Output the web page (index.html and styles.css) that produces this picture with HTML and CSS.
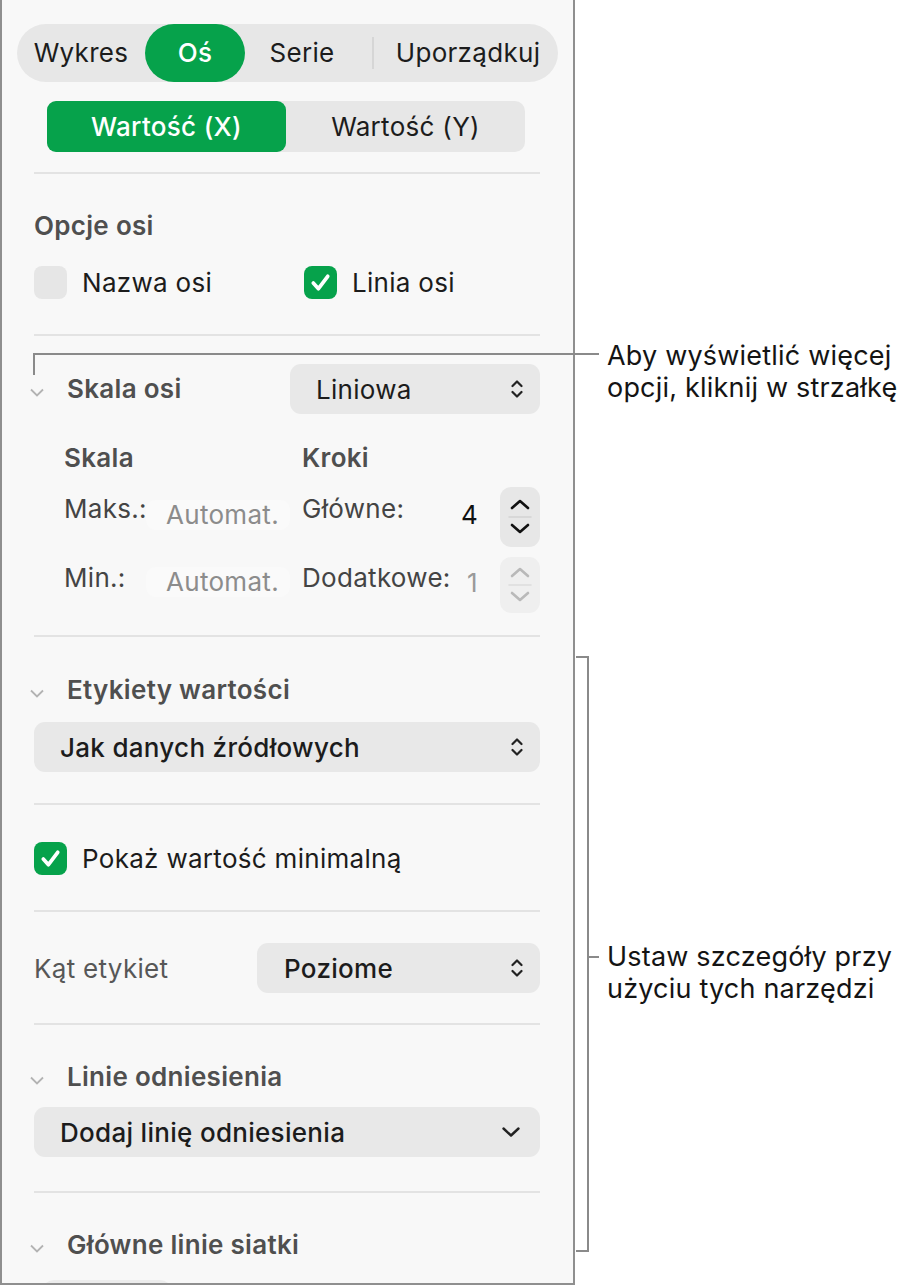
FILE: index.html
```html
<!DOCTYPE html>
<html lang="pl">
<head>
    <meta charset="UTF-8">
    <meta name="viewport" content="width=device-width, initial-scale=1.0">
    <title>Oś – inspektor wykresu</title>
    <link rel="stylesheet" href="styles.css">
</head>
<body>
    <div class="page">
        <aside class="inspector">
            <nav class="tabs">
                <span class="tab tab-chart">Wykres</span>
                <span class="tab tab-axis active">Oś</span>
                <span class="tab tab-series">Serie</span>
                <span class="tab-sep"></span>
                <span class="tab tab-arrange">Uporządkuj</span>
            </nav>

            <div class="segmented">
                <span class="seg active">Wartość (X)</span>
                <span class="seg">Wartość (Y)</span>
            </div>

            <section class="group group-options">
                <h3 class="group-title">Opcje osi</h3>
                <div class="check-row">
                    <label class="check check-wide"><span class="box"></span>Nazwa osi</label>
                    <label class="check"><span class="box on"><svg viewBox="0 0 32 32"><path d="M9 16.5l5 5.5 9-12"/></svg></span>Linia osi</label>
                </div>
            </section>

            <section class="group group-scale">
                <div class="disclosure-row">
                    <span class="disclosure"><svg viewBox="0 0 14 9"><path d="M1 1.5l6 6 6-6"/></svg></span>
                    <h3 class="group-title">Skala osi</h3>
                    <div class="popup popup-scale">
                        <span>Liniowa</span>
                        <svg class="updown" viewBox="0 0 12 22"><path d="M1.5 8L6 3.5 10.5 8M1.5 14L6 18.5 10.5 14"/></svg>
                    </div>
                </div>

                <div class="scale-grid">
                    <span class="sub-title col-a">Skala</span>
                    <span class="sub-title col-b">Kroki</span>
                </div>
                <div class="scale-grid scale-row row-max">
                    <span class="field-label">Maks.:</span>
                    <span class="field">Automat.</span>
                    <span class="field-label col-b">Główne:</span>
                    <span class="value">4</span>
                    <div class="stepper">
                        <svg viewBox="0 0 40 60"><path d="M12 21l8-7 8 7M12 38l8 7 8-7"/><line x1="9" y1="30" x2="31" y2="30"/></svg>
                    </div>
                </div>
                <div class="scale-grid scale-row row-min">
                    <span class="field-label">Min.:</span>
                    <span class="field">Automat.</span>
                    <span class="field-label col-b">Dodatkowe:</span>
                    <span class="value muted">1</span>
                    <div class="stepper disabled">
                        <svg viewBox="0 0 40 56"><path d="M12 19l8-7 8 7M12 36l8 7 8-7"/><line x1="9" y1="28" x2="31" y2="28"/></svg>
                    </div>
                </div>
            </section>

            <section class="group group-labels">
                <div class="disclosure-row">
                    <span class="disclosure"><svg viewBox="0 0 14 9"><path d="M1 1.5l6 6 6-6"/></svg></span>
                    <h3 class="group-title">Etykiety wartości</h3>
                </div>
                <div class="popup popup-full strong">
                    <span>Jak danych źródłowych</span>
                    <svg class="updown" viewBox="0 0 12 22"><path d="M1.5 8L6 3.5 10.5 8M1.5 14L6 18.5 10.5 14"/></svg>
                </div>
            </section>

            <section class="group group-min">
                <label class="check"><span class="box on"><svg viewBox="0 0 32 32"><path d="M9 16.5l5 5.5 9-12"/></svg></span>Pokaż wartość minimalną</label>
            </section>

            <section class="group group-angle">
                <span class="plain-label">Kąt etykiet</span>
                <div class="popup popup-angle strong">
                    <span>Poziome</span>
                    <svg class="updown" viewBox="0 0 12 22"><path d="M1.5 8L6 3.5 10.5 8M1.5 14L6 18.5 10.5 14"/></svg>
                </div>
            </section>

            <section class="group group-ref">
                <div class="disclosure-row">
                    <span class="disclosure"><svg viewBox="0 0 14 9"><path d="M1 1.5l6 6 6-6"/></svg></span>
                    <h3 class="group-title">Linie odniesienia</h3>
                </div>
                <div class="popup popup-full strong">
                    <span>Dodaj linię odniesienia</span>
                    <svg class="chev-down" viewBox="0 0 18 10"><path d="M1.5 1.5L9 8.5l7.5-7"/></svg>
                </div>
            </section>

            <section class="group group-grid">
                <div class="disclosure-row">
                    <span class="disclosure"><svg viewBox="0 0 14 9"><path d="M1 1.5l6 6 6-6"/></svg></span>
                    <h3 class="group-title">Główne linie siatki</h3>
                </div>
                <div class="peek"></div>
            </section>
        </aside>

        <!-- callouts -->
        <div class="callout-line line-top-h"></div>
        <div class="callout-line line-top-v"></div>
        <p class="callout callout-top">Aby wyświetlić więcej<br>opcji, kliknij w strzałkę</p>

        <div class="bracket"></div>
        <div class="callout-line line-mid"></div>
        <p class="callout callout-mid">Ustaw szczegóły przy<br>użyciu tych narzędzi</p>
    </div>
</body>
</html>
```

FILE: styles.css
```css
body {
    margin: 0;
    background-color: #fff;
    font-family: Inter, "Noto Sans", sans-serif;
    color: #1c1c1c;
}

.page {
    position: relative;
    width: 904px;
    height: 1287px;
    overflow: hidden;
}

.inspector {
    box-sizing: border-box;
    width: 575px;
    height: 1285px;
    padding: 0 33px 0 32px;
    background-color: #f8f8f8;
    border: 2px solid #8f8f8f;
    border-top: none;
    overflow: hidden;
    font-size: 26px;
    letter-spacing: 0.3px;
}

/* top tabs */
.tabs {
    display: flex;
    align-items: center;
    margin: 24px -18px 0 -17px;
    height: 58px;
    background-color: #e7e7e7;
    border-radius: 29px;
}

.tab {
    flex: none;
    height: 58px;
    line-height: 58px;
    text-align: center;
}

.tab-chart { width: 128px; }
.tab-axis { width: 100px; }
.tab-series { width: 114px; }
.tab-arrange { width: 180px; margin-left: 4px; }

.tab.active {
    background-color: #06a24b;
    color: #fff;
    font-weight: 500;
    border-radius: 29px;
}

.tab-sep {
    width: 2px;
    height: 32px;
    margin-left: 13px;
    background-color: #d6d6d6;
}

/* X / Y switch */
.segmented {
    display: flex;
    width: 478px;
    height: 51px;
    margin: 19px 0 20px 13px;
    background-color: #e7e7e7;
    border-radius: 10px;
}

.seg {
    flex: 1;
    line-height: 51px;
    text-align: center;
}

.seg.active {
    background-color: #06a24b;
    color: #fff;
    font-weight: 500;
    border-radius: 9px;
}

/* groups */
.group {
    border-top: 2px solid #e3e3e3;
}

.group-title {
    margin: 0;
    font-size: 26px;
    line-height: 30px;
    font-weight: 600;
    color: #4f4f4f;
}

.disclosure-row {
    display: flex;
    align-items: center;
}

.disclosure {
    display: flex;
    width: 14px;
    margin: 6px 23px 0 -4px;
}

.disclosure svg {
    width: 14px;
    height: 9px;
    fill: none;
    stroke: #b3b3b3;
    stroke-width: 1.8;
}

.check-row {
    display: flex;
    margin-top: 25px;
}

.check {
    display: flex;
    align-items: center;
    gap: 15px;
    height: 32px;
}

.check-wide {
    width: 270px;
}

.box {
    width: 33px;
    height: 33px;
    border-radius: 8px;
    background-color: #e6e6e6;
}

.box.on {
    background-color: #06a24b;
}

.box svg {
    width: 33px;
    height: 33px;
    fill: none;
    stroke: #fff;
    stroke-width: 3.6;
    stroke-linecap: round;
    stroke-linejoin: round;
}

.group-options { padding: 37px 0 36px; }
.group-scale { padding: 28px 0 22px; }
.group-labels { padding: 38px 0 31px; }
.group-min { padding: 37px 0 36px; }
.group-angle { padding: 31px 0 30px; display: flex; align-items: center; justify-content: space-between; }
.group-ref { padding: 37px 0 34px; }
.group-grid { padding: 37px 0 0; }

/* popups */
.popup {
    box-sizing: border-box;
    display: flex;
    align-items: center;
    justify-content: space-between;
    height: 50px;
    padding: 0 17px 0 26px;
    background-color: #e8e8e8;
    border-radius: 11px;
    color: #1c1c1c;
}

.popup.strong span {
    font-weight: 500;
}

.popup-scale {
    width: 250px;
    margin-left: auto;
}

.popup-full {
    margin-top: 17px;
}

.group-ref .popup-full {
    margin-top: 15px;
}

.popup-angle {
    width: 283px;
    padding-left: 27px;
}

.updown {
    width: 12px;
    height: 22px;
    fill: none;
    stroke: #222;
    stroke-width: 2.2;
    stroke-linecap: round;
    stroke-linejoin: round;
}

.chev-down {
    width: 18px;
    height: 10px;
    margin-right: 3px;
    fill: none;
    stroke: #222;
    stroke-width: 2.4;
    stroke-linecap: round;
    stroke-linejoin: round;
}

.plain-label {
    color: #575757;
}

/* scale / steps grid */
.scale-grid {
    display: grid;
    grid-template-columns: 86px 140px 12px 150px 48px 40px;
    padding-left: 30px;
}

.sub-title {
    margin-top: 29px;
    line-height: 30px;
    font-weight: 600;
    color: #4f4f4f;
}

.col-a { grid-column: 1; }
.col-b { grid-column: 4; }

.scale-row {
    align-items: start;
}

.row-max {
    height: 60px;
    margin-top: 14px;
}

.row-min {
    height: 56px;
    margin-top: 10px;
}

.field-label {
    line-height: 30px;
    color: #444;
    white-space: nowrap;
}

.row-max .field-label { margin-top: 7px; }
.row-min .field-label { margin-top: 6px; }

.field {
    grid-column: 2;
    margin-left: -4px;
    padding-left: 20px;
    line-height: 30px;
    color: #8c8c8c;
    background-color: #fafafa;
    border-radius: 10px;
    white-space: nowrap;
}

.row-max .field { margin-top: 13px; }
.row-min .field { margin-top: 10px; }

.value {
    grid-column: 5;
    padding-right: 22px;
    line-height: 30px;
    text-align: right;
    color: #111;
}

.row-max .value { margin-top: 13px; }
.row-min .value { margin-top: 11px; }

.value.muted {
    color: #9a9a9a;
}

.stepper {
    grid-column: 6;
    height: 100%;
    background-color: #e7e7e7;
    border-radius: 11px;
}

.stepper svg {
    display: block;
    width: 40px;
    height: 100%;
    fill: none;
    stroke: #111;
    stroke-width: 2.6;
    stroke-linecap: round;
    stroke-linejoin: round;
}

.stepper svg line {
    stroke: #d4d4d4;
    stroke-width: 1.5;
}

.stepper.disabled {
    background-color: #efefef;
}

.stepper.disabled svg {
    stroke: #b9b9b9;
}

.stepper.disabled svg line {
    stroke: #dddddd;
}

.peek {
    width: 130px;
    height: 30px;
    margin: 20px 0 0 8px;
    background-color: #ececec;
    border-radius: 12px;
}

/* callouts */
.callout-line {
    position: absolute;
    background-color: #8a8a8a;
}

.line-top-h {
    left: 33px;
    top: 353px;
    width: 566px;
    height: 2px;
}

.line-top-v {
    left: 33px;
    top: 353px;
    width: 2px;
    height: 22px;
}

.bracket {
    position: absolute;
    left: 576px;
    top: 656px;
    width: 11px;
    height: 592px;
    border: 2px solid #8a8a8a;
    border-left: none;
}

.line-mid {
    left: 589px;
    top: 956px;
    width: 10px;
    height: 2px;
}

.callout {
    position: absolute;
    left: 607px;
    margin: 0;
    font-size: 27px;
    letter-spacing: 0.2px;
    line-height: 32px;
    color: #141414;
}

.callout-top { top: 340px; }
.callout-mid { top: 941px; }
```
